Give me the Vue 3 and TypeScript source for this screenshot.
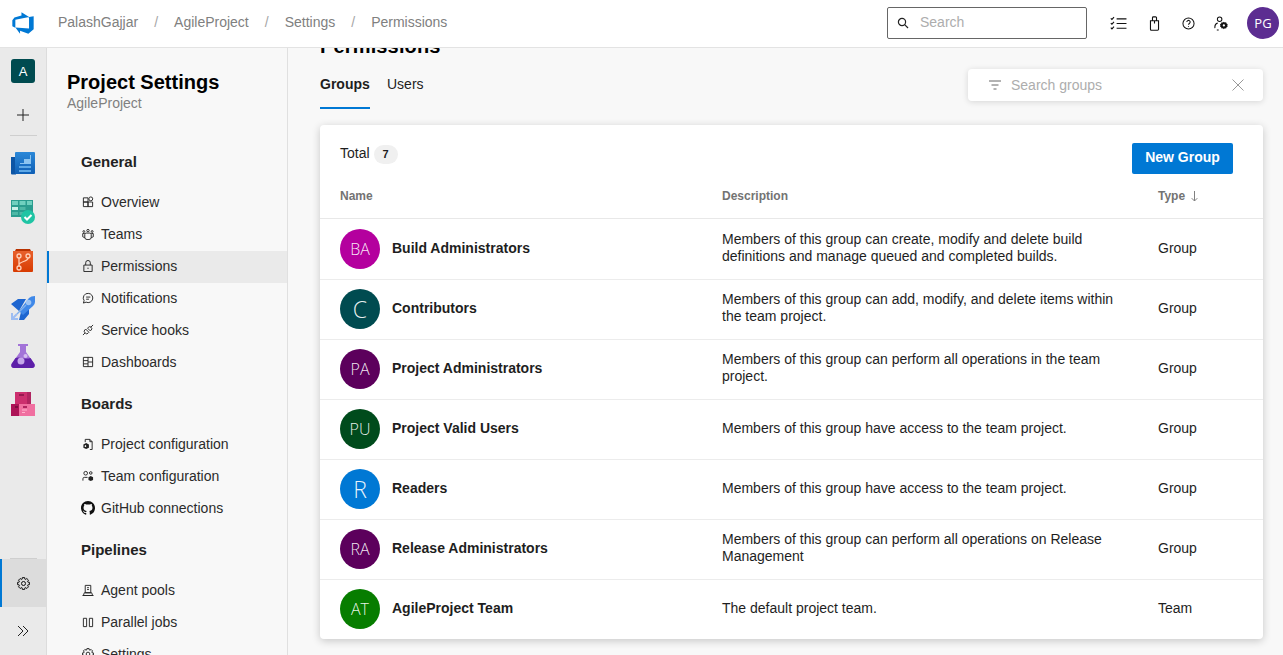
<script setup lang="ts">
interface NavItem {
  label: string;
  icon: string;
  active?: boolean;
}
interface NavSection {
  title: string;
  items: NavItem[];
}
interface Group {
  initials: string;
  name: string;
  description: string;
  type: string;
  color: string;
}

const crumbs = ['PalashGajjar', 'AgileProject', 'Settings', 'Permissions'];

// toothed ring, used for the settings icons
function gearPath(cx: number, cy: number, outer: number, inner: number, hole: number): string {
  const teeth = 8;
  let d = '';
  for (let i = 0; i < teeth; i++) {
    const a = (i / teeth) * Math.PI * 2;
    const pts: [number, number][] = [
      [inner, a - 0.3],
      [outer, a - 0.2],
      [outer, a + 0.2],
      [inner, a + 0.3],
    ];
    for (const [r, t] of pts) {
      d += `${d ? 'L' : 'M'}${(cx + r * Math.cos(t)).toFixed(2)} ${(cy + r * Math.sin(t)).toFixed(2)}`;
    }
  }
  d += `ZM${cx - hole} ${cy}a${hole} ${hole} 0 1 0 ${hole * 2} 0a${hole} ${hole} 0 1 0 ${-hole * 2} 0Z`;
  return d;
}

const gear = gearPath(6.5, 6.5, 6, 4.6, 2);

const icons: Record<string, string> = {
  overview: 'M1.5 6.5h5v5h-5zM6.5 6.5h5v5h-5zM1.5 2h5v4.5h-5zM9.5 1a2 2 0 1 1 0 4.2 2 2 0 0 1 0-4.2z',
  teams: 'M4.5 5.5h4A1.5 1.5 0 0 1 10 7v3a2.5 2.5 0 0 1-2.5 2.5h-2A2.5 2.5 0 0 1 3 10V7a1.5 1.5 0 0 1 1.5-1.5zM6.5 1.5a1.3 1.3 0 1 1 0 2.6 1.3 1.3 0 0 1 0-2.6zM2 2.8a1 1 0 1 1 0 2 1 1 0 0 1 0-2zM11 2.8a1 1 0 1 1 0 2 1 1 0 0 1 0-2zM3 6H.8v3.5l2.2 1M10 6h2.2v3.5l-2.2 1',
  lock: 'M2 5.5h9v7H2zM4 5.5V3a2.5 2.5 0 0 1 5 0v2.5M6.5 8.3v1.4',
  chat: 'M6.8 1.5a5 5 0 1 1-2.3 9.5L1.5 12l.8-2.6A5 5 0 0 1 6.8 1.5zM4.5 5.5H9M4.5 7.8h3',
  hook: 'M1 12l2.5-2.5M12 1L9.5 3.5M4 5.5L7.5 9l-1 1a2 2 0 0 1-2.8 0L3 9.3a2 2 0 0 1 0-2.8zM6 4.5l1-1a2 2 0 0 1 2.8 0l.2.2a2 2 0 0 1 0 2.8l-1 1z',
  dash: 'M1.5 1.5h10v10h-10zM6.5 1.5v10M1.5 5h5M1.5 8.5h5M6.5 6.5h5',
  project: 'M3.5 4.5v-3h5L11 4v8.5H8.5M8.5 1.5V4H11',
  teamcfg: 'M4 1.5a2 2 0 1 1 0 4 2 2 0 0 1 0-4zM1 11.5v-2A1.5 1.5 0 0 1 2.5 8H6M9.5 1.8a1.4 1.4 0 1 1 0 2.8 1.4 1.4 0 0 1 0-2.8z',
  agent: 'M3.5 1.5h6v8h-6zM.5 12.5h12M2.5 9.5h8l1 3h-10zM5.5 4h2M5.5 6h2',
  parallel: 'M1.5 2.5H5v9H1.5zM8 2.5h3.5v9H8z',
  gear,
};

const fills: Record<string, string> = {
  project: 'M4.5 5.5l3 1.5v3.5l-3 1.5-3-1.5V7zM4.5 8a1 1 0 1 0 0 1.5z',
  teamcfg: 'M9.5 6.5L12 7.8v2.9L9.5 12 7 10.7V7.8z',
};

const sections: NavSection[] = [
  {
    title: 'General',
    items: [
      { label: 'Overview', icon: 'overview' },
      { label: 'Teams', icon: 'teams' },
      { label: 'Permissions', icon: 'lock', active: true },
      { label: 'Notifications', icon: 'chat' },
      { label: 'Service hooks', icon: 'hook' },
      { label: 'Dashboards', icon: 'dash' },
    ],
  },
  {
    title: 'Boards',
    items: [
      { label: 'Project configuration', icon: 'project' },
      { label: 'Team configuration', icon: 'teamcfg' },
      { label: 'GitHub connections', icon: 'github' },
    ],
  },
  {
    title: 'Pipelines',
    items: [
      { label: 'Agent pools', icon: 'agent' },
      { label: 'Parallel jobs', icon: 'parallel' },
      { label: 'Settings', icon: 'gear' },
    ],
  },
];

const groups: Group[] = [
  { initials: 'BA', name: 'Build Administrators', description: 'Members of this group can create, modify and delete build definitions and manage queued and completed builds.', type: 'Group', color: '#b4009e' },
  { initials: 'C', name: 'Contributors', description: 'Members of this group can add, modify, and delete items within the team project.', type: 'Group', color: '#004b50' },
  { initials: 'PA', name: 'Project Administrators', description: 'Members of this group can perform all operations in the team project.', type: 'Group', color: '#5c005c' },
  { initials: 'PU', name: 'Project Valid Users', description: 'Members of this group have access to the team project.', type: 'Group', color: '#004b1c' },
  { initials: 'R', name: 'Readers', description: 'Members of this group have access to the team project.', type: 'Group', color: '#0078d4' },
  { initials: 'RA', name: 'Release Administrators', description: 'Members of this group can perform all operations on Release Management', type: 'Group', color: '#5c005c' },
  { initials: 'AT', name: 'AgileProject Team', description: 'The default project team.', type: 'Team', color: '#077d00' },
];
</script>

<template>
  <div class="page">
    <header class="topbar">
      <svg class="logo" viewBox="0 0 18 18" width="24" height="24">
        <path fill="#0078d4" d="M17 4v9.74l-4 3.28-6.2-2.26V17l-3.51-4.59 10.23.8V4.44zm-3.41.49L7.85 1v2.29L2.58 4.84 1 6.87v4.61l2.26 1V6.57z" />
      </svg>
      <nav class="crumbs">
        <template v-for="(crumb, i) in crumbs" :key="crumb">
          <span v-if="i > 0" class="slash">/</span>
          <span>{{ crumb }}</span>
        </template>
      </nav>
      <div class="top-search">
        <svg viewBox="0 0 12 12" width="12" height="12" fill="none" stroke="#222" stroke-width="1.2">
          <circle cx="5" cy="5" r="3.6" />
          <path d="M7.7 7.7L11 11" />
        </svg>
        <span>Search</span>
      </div>
      <div class="top-icons">
        <svg viewBox="0 0 18 16" width="17" height="15" fill="none" stroke="#111" stroke-width="1.2">
          <path d="M7 3h10.5M7 8h10.5M7 13h10.5M.8 2.5L2 3.7l2.2-2.4M.8 7.5L2 8.7l2.2-2.4M.8 12.5L2 13.7l2.2-2.4" />
        </svg>
        <svg viewBox="0 0 12 16" width="11" height="15" fill="none" stroke="#111" stroke-width="1.2">
          <path d="M1.6 5h8.8v9.4a1 1 0 0 1-1 1H2.6a1 1 0 0 1-1-1zM3.8 5V1.8a1 1 0 0 1 1-1h2.4a1 1 0 0 1 1 1V5M6 5v3" />
        </svg>
        <svg viewBox="0 0 14 14" width="13" height="13" fill="none" stroke="#111" stroke-width="1.1">
          <circle cx="7" cy="7" r="6" />
          <path d="M5.2 5.4a1.8 1.8 0 1 1 2.7 1.6c-.6.4-.9.7-.9 1.4M7 10v.9" />
        </svg>
        <svg viewBox="0 0 16 16" width="15" height="15" fill="none" stroke="#111" stroke-width="1.1">
          <circle cx="6" cy="3.5" r="2.4" />
          <path d="M1 13c-.4-3 1-5 3-5.5M3 15h2" />
          <path fill="#111" stroke="none" d="M10.5 6l1 .9 1.4-.2.5 1.3 1.2.7-.4 1.3.4 1.3-1.2.7-.5 1.3-1.4-.2-1 .9-1-.9-1.4.2-.5-1.3-1.2-.7.4-1.3-.4-1.3 1.2-.7.5-1.3 1.4.2z" />
          <circle cx="10.5" cy="10" r="1.2" fill="#fff" stroke="none" />
        </svg>
        <div class="me">PG</div>
      </div>
    </header>

    <div class="body">
      <aside class="rail">
        <div class="tile">A</div>
        <svg class="plus" viewBox="0 0 12 12" width="12" height="12" fill="none" stroke="#222" stroke-width="1">
          <path d="M6 0v12M0 6h12" />
        </svg>
        <div class="rail-line"></div>

        <svg class="app" viewBox="0 0 24 24" width="24" height="24">
          <defs>
            <linearGradient id="boards" x1="0" y1="0" x2="0" y2="1">
              <stop offset="0" stop-color="#2b88d8" />
              <stop offset="1" stop-color="#0f5fb5" />
            </linearGradient>
            <linearGradient id="repos" x1="0" y1="0" x2="0" y2="1">
              <stop offset="0" stop-color="#e8602c" />
              <stop offset="1" stop-color="#d83b01" />
            </linearGradient>
          </defs>
          <path fill="#0c55a5" d="M0 5h5v17.5H1a1 1 0 0 1-1-1z" />
          <rect x="4" y="0" width="20" height="22" rx="1" fill="url(#boards)" />
          <path fill="#8cc4f0" d="M9 11h4V7h6V3h1v9H9z" />
          <path fill="#5ea8e6" d="M8 14h12v2H8zM8 18h12v2H8z" />
        </svg>

        <svg class="app" viewBox="0 0 24 24" width="24" height="24">
          <rect x="0" y="0" width="22" height="17" fill="#2a9d8f" />
          <path fill="#6fd0bf" d="M1 1h6v4H1zM8.5 1h6v4h-6zM16 1h5v4h-5z" />
          <path fill="#c8f0e8" d="M1 7h6v3H1z" />
          <path fill="#4db8a6" d="M8.5 7h6v3h-6zM1 12h6v3H1zM8.5 12h6v3h-6z" />
          <circle cx="17" cy="17" r="7" fill="#1fc4a4" />
          <path d="M13.5 17l2.5 2.5 4.5-4.5" fill="none" stroke="#fff" stroke-width="2" />
        </svg>

        <svg class="app" viewBox="0 0 24 24" width="24" height="24">
          <path fill="#b83200" d="M4 3l1-2h14l1 2z" />
          <path fill="url(#repos)" d="M2 3h20v20a1 1 0 0 1-1 1H3a1 1 0 0 1-1-1z" />
          <g fill="none" stroke="#ffd0b8" stroke-width="1.3">
            <circle cx="8" cy="8" r="2" />
            <circle cx="17" cy="8" r="2" />
            <circle cx="8" cy="20" r="2" />
            <path d="M8 10v8M17 10c0 4-9 3-9 7" />
          </g>
        </svg>

        <svg class="app" viewBox="0 0 24 24" width="24" height="24">
          <path fill="#1e66d0" d="M0 8l7-5h8L8 15zM10 16l8-8v10l-5 6h-5z" />
          <path fill="#3f88e8" d="M8 15L18 2q2-2 6-2v6q0 2-2 4L12 19z" />
          <circle cx="17.5" cy="6.5" r="2.8" fill="#9cc4f4" />
          <path fill="none" stroke="#7fb0ee" stroke-width="1.5" d="M6 18L15 9" />
          <path fill="none" stroke="#9dbdf2" stroke-width="2" d="M1 17v6h6M1 23l5-5" />
        </svg>

        <svg class="app" viewBox="0 0 24 24" width="24" height="24">
          <path fill="#a374d8" d="M7 0h10v2h-2v6l8.5 12q1 4-2.5 4H3q-3.5 0-2.5-4L9 8V2H7z" />
          <path fill="#5d1fa8" d="M4.5 14c5-2 9 2 15 0l4 6q1 4-2.5 4H3q-3.5 0-2.5-4z" />
          <circle cx="10" cy="17" r="3.5" fill="#c5a6ea" />
          <circle cx="14.5" cy="12" r="2" fill="#d5bdf0" />
        </svg>

        <svg class="app last" viewBox="0 0 24 24" width="24" height="24">
          <rect x="4" y="0" width="16" height="13" fill="#cc2f6e" />
          <rect x="16" y="0" width="4" height="13" fill="#b02460" />
          <rect x="8" y="2" width="5" height="2" fill="#96194f" />
          <rect x="0" y="12" width="8" height="12" fill="#ad1457" />
          <rect x="8" y="12" width="16" height="12" fill="#f06fa0" />
          <rect x="4" y="14" width="3" height="2" fill="#7d0e3e" />
          <rect x="12" y="14" width="4" height="2" fill="#b02460" />
          <path stroke="#ffb3cd" d="M11 18h5M11 20.5h3" />
        </svg>

        <div class="rail-spacer"></div>
        <div class="rail-line flat"></div>
        <div class="rail-settings">
          <svg viewBox="0 0 13 13" width="13" height="13" fill="none" stroke="#111" stroke-width="1">
            <path :d="icons.gear" />
          </svg>
        </div>
        <div class="rail-expand">
          <svg viewBox="0 0 12 12" width="12" height="12" fill="none" stroke="#222" stroke-width="1">
            <path d="M1 1l5 5-5 5M6 1l5 5-5 5" />
          </svg>
        </div>
      </aside>

      <aside class="sidebar">
        <div class="side-title">Project Settings</div>
        <div class="side-sub">AgileProject</div>
        <section v-for="section in sections" :key="section.title" class="nav-section">
          <h3>{{ section.title }}</h3>
          <div
            v-for="item in section.items"
            :key="item.label"
            class="nav-item"
            :class="{ active: item.active }"
          >
            <svg v-if="item.icon === 'github'" class="gh" viewBox="0 0 16 16" width="14" height="14" fill="#111">
              <path d="M8 0C3.58 0 0 3.58 0 8c0 3.54 2.29 6.53 5.47 7.59.4.07.55-.17.55-.38 0-.19-.01-.82-.01-1.49-2.01.37-2.53-.49-2.69-.94-.09-.23-.48-.94-.82-1.13-.28-.15-.68-.52-.01-.53.63-.01 1.08.58 1.23.82.72 1.21 1.87.87 2.33.66.07-.52.28-.87.51-1.07-1.78-.2-3.64-.89-3.64-3.95 0-.87.31-1.59.82-2.15-.08-.2-.36-1.02.08-2.12 0 0 .67-.21 2.2.82.64-.18 1.32-.27 2-.27s1.36.09 2 .27c1.53-1.04 2.2-.82 2.2-.82.44 1.1.16 1.92.08 2.12.51.56.82 1.27.82 2.15 0 3.07-1.87 3.75-3.65 3.95.29.25.54.73.54 1.48 0 1.07-.01 1.93-.01 2.2 0 .21.15.46.55.38A8.01 8.01 0 0 0 16 8c0-4.42-3.58-8-8-8z" />
            </svg>
            <svg v-else viewBox="0 0 13 13" width="12" height="12" fill="none" stroke="#222" stroke-width="1">
              <path :d="icons[item.icon]" />
              <path v-if="fills[item.icon]" :d="fills[item.icon]" fill="#222" stroke="none" fill-rule="evenodd" />
            </svg>
            <span>{{ item.label }}</span>
          </div>
        </section>
      </aside>

      <main class="main">
        <h1>Permissions</h1>
        <div class="tabs-row">
          <div class="tabs">
            <div class="tab on">Groups</div>
            <div class="tab">Users</div>
          </div>
          <div class="filter">
            <svg viewBox="0 0 12 10" width="12" height="10" fill="none" stroke="#666" stroke-width="1">
              <path d="M0 1h12M2.5 5h7M4.5 9h3" />
            </svg>
            <span>Search groups</span>
            <svg class="close" viewBox="0 0 12 12" width="12" height="12" fill="none" stroke="#999" stroke-width="1">
              <path d="M.5.5l11 11M11.5.5l-11 11" />
            </svg>
          </div>
        </div>

        <div class="card">
          <div class="card-head">
            <div class="total">
              <span>Total</span>
              <span class="count">7</span>
            </div>
            <button class="new-group" type="button">New Group</button>
          </div>
          <div class="row head">
            <div>Name</div>
            <div>Description</div>
            <div class="type-head">
              Type
              <svg viewBox="0 0 7 11" width="7" height="11" fill="none" stroke="#808080" stroke-width="1">
                <path d="M3.5 0v10M.7 7.2l2.8 2.8 2.8-2.8" />
              </svg>
            </div>
          </div>
          <div v-for="group in groups" :key="group.name" class="row item">
            <div class="who">
              <div class="avatar" :class="{ big: group.initials.length === 1 }" :style="{ background: group.color }">{{ group.initials }}</div>
              <strong>{{ group.name }}</strong>
            </div>
            <div class="desc">{{ group.description }}</div>
            <div class="kind">{{ group.type }}</div>
          </div>
        </div>
      </main>
    </div>
  </div>
</template>

<style>
html,
body {
  margin: 0;
  overflow: hidden;
}
</style>

<style scoped>
.page {
  height: 655px;
  display: flex;
  flex-direction: column;
  overflow: hidden;
  font-family: 'Liberation Sans', Arial, sans-serif;
  font-size: 14px;
  color: #1e1e1e;
  background: #f8f8f8;
}

.topbar {
  height: 46px;
  padding-bottom: 1px;
  flex-shrink: 0;
  display: flex;
  align-items: center;
  background: #fff;
  border-bottom: 1px solid #e3e3e3;
  position: relative;
  z-index: 2;
}

.logo {
  margin-left: 11px;
}

.crumbs {
  margin-left: 23px;
  padding-bottom: 2px;
  color: #808080;
  display: flex;
}

.slash {
  margin: 0 16px;
  color: #a6a6a6;
}

.top-search {
  margin-left: auto;
  width: 200px;
  height: 32px;
  box-sizing: border-box;
  border: 1px solid #666;
  border-radius: 2px;
  display: flex;
  align-items: center;
  gap: 11px;
  padding: 0 0 2px 9px;
  color: #adadad;
}

.top-search svg {
  margin-top: 2px;
}

.top-icons {
  display: flex;
  align-items: center;
  margin-left: 23px;
  margin-right: 4px;
}

.top-icons svg:nth-child(1) {
  margin-right: 22px;
}

.top-icons svg:nth-child(2) {
  margin-right: 22px;
}

.top-icons svg:nth-child(3) {
  margin-right: 19px;
}

.top-icons svg:nth-child(4) {
  margin-right: 18px;
}

.me {
  width: 32px;
  height: 32px;
  border-radius: 50%;
  background: #5c2d91;
  color: #fff;
  display: flex;
  align-items: center;
  justify-content: center;
  font-family: 'Open Sans', sans-serif;
  font-size: 13px;
}

.body {
  flex: 1;
  min-height: 0;
  display: flex;
}

.rail {
  width: 46px;
  flex-shrink: 0;
  background: #eaeaea;
  border-right: 1px solid #dcdcdc;
  display: flex;
  flex-direction: column;
  align-items: center;
}

.tile {
  width: 24px;
  height: 24px;
  margin-top: 11px;
  border-radius: 3px;
  background: #004b50;
  color: #fff;
  font-size: 13px;
  display: flex;
  align-items: center;
  justify-content: center;
}

.plus {
  margin-top: 26px;
}

.rail-line {
  width: 27px;
  height: 1px;
  margin-top: 14px;
  background: #cfcfcf;
  flex-shrink: 0;
}

.rail-line.flat {
  margin-top: 0;
}

.app {
  margin-top: 16px;
  margin-bottom: 8px;
  flex-shrink: 0;
}

.app.last {
  margin-bottom: 0;
}

.rail-spacer {
  flex: 1;
}

.rail-settings {
  width: 100%;
  height: 48px;
  box-sizing: border-box;
  border-left: 2px solid #0078d4;
  background: #dcdcdc;
  display: flex;
  align-items: center;
  justify-content: center;
  padding-right: 2px;
}

.rail-expand {
  height: 48px;
  display: flex;
  align-items: center;
}

.sidebar {
  width: 240px;
  flex-shrink: 0;
  background: #f8f8f8;
  border-right: 1px solid #e0e0e0;
  overflow: hidden;
}

.side-title {
  margin: 22px 0 0 20px;
  font-size: 20px;
  line-height: 24px;
  font-weight: 700;
  color: #000;
}

.side-sub {
  margin-left: 20px;
  color: #808080;
  line-height: 18px;
}

.nav-section {
  margin-top: 15px;
}

.nav-section:first-of-type {
  margin-top: 40px;
}

.nav-section h3 {
  margin: 0 0 15px;
  padding-left: 34px;
  font-size: 15px;
  line-height: 20px;
  font-weight: 700;
  color: #222;
}

.nav-item {
  height: 32px;
  display: flex;
  align-items: center;
  padding: 0 0 2px 35px;
  gap: 7px;
  box-sizing: border-box;
  color: #2b2b2b;
}

.nav-item svg {
  width: 12px;
  flex-shrink: 0;
}

.nav-item .gh {
  width: 14px;
  margin: 0 -1px;
}

.nav-item.active {
  background: #eaeaea;
  box-shadow: inset 2px 0 0 #0078d4;
}

.main {
  flex: 1;
  min-width: 0;
  padding: 0 20px 0 32px;
  overflow: hidden;
}

h1 {
  margin: -14px 0 0;
  font-size: 20px;
  line-height: 24px;
  font-weight: 700;
  letter-spacing: 0.15px;
  color: #000;
}

.tabs-row {
  display: flex;
  align-items: flex-start;
  justify-content: space-between;
  margin-top: 8px;
}

.tabs {
  display: flex;
  gap: 17px;
  padding-top: 8px;
}

.tab {
  height: 35px;
  line-height: 20px;
  box-sizing: border-box;
}

.tab.on {
  font-weight: 700;
  width: 50px;
  border-bottom: 2px solid #0078d4;
}

.filter {
  width: 295px;
  height: 32px;
  margin-top: 3px;
  border-radius: 4px;
  background: #fff;
  box-shadow: 0 1px 6px rgba(0, 0, 0, 0.14);
  display: flex;
  align-items: center;
  padding: 0 19px 0 21px;
  box-sizing: border-box;
  color: #adadad;
}

.filter span {
  margin-left: 10px;
}

.close {
  margin-left: auto;
}

.card {
  margin-top: 16px;
  height: 514px;
  border-radius: 4px;
  background: #fff;
  box-shadow: 0 2px 8px rgba(0, 0, 0, 0.2);
}

.card-head {
  display: flex;
  align-items: flex-start;
  justify-content: space-between;
  padding: 18px 30px 0 20px;
}

.total {
  display: flex;
  align-items: center;
  gap: 4px;
  height: 20px;
}

.count {
  width: 24px;
  height: 19px;
  margin-top: 2px;
  border-radius: 10px;
  background: #f0f0f0;
  font-size: 11px;
  font-weight: 700;
  display: flex;
  align-items: center;
  justify-content: center;
}

.new-group {
  width: 101px;
  height: 31px;
  border: 0;
  border-radius: 2px;
  padding: 0 0 3px;
  background: #0078d4;
  color: #fff;
  font-family: inherit;
  font-size: 14px;
  font-weight: 700;
  margin-bottom: 1px;
}

.row {
  display: grid;
  grid-template-columns: 382px 436px 1fr;
  align-items: center;
  padding-left: 20px;
  box-sizing: border-box;
}

.row.head {
  height: 44px;
  padding-bottom: 2px;
  margin-bottom: 1px;
  font-size: 12px;
  font-weight: 700;
  color: #737373;
  border-bottom: 1px solid #e8e8e8;
}

.type-head {
  display: flex;
  align-items: center;
  gap: 6px;
}

.type-head svg {
  margin-top: 2px;
}

.row.item {
  height: 60px;
  border-bottom: 1px solid #ececec;
  line-height: 17px;
}

.row.item:last-child {
  height: 59px;
  border-bottom: 0;
}

.who {
  display: flex;
  align-items: center;
  gap: 12px;
}

.who strong {
  color: #1e1e1e;
  padding-bottom: 3px;
}

.avatar {
  width: 40px;
  height: 40px;
  margin-bottom: 1px;
  border-radius: 50%;
  color: rgba(255, 255, 255, 0.92);
  font-family: 'Open Sans', sans-serif;
  font-size: 16px;
  font-weight: 300;
  display: flex;
  align-items: center;
  justify-content: center;
}

.avatar.big {
  font-size: 23px;
}

.desc {
  padding: 0 30px 3px 0;
}

.kind {
  padding-bottom: 2px;
}
</style>
